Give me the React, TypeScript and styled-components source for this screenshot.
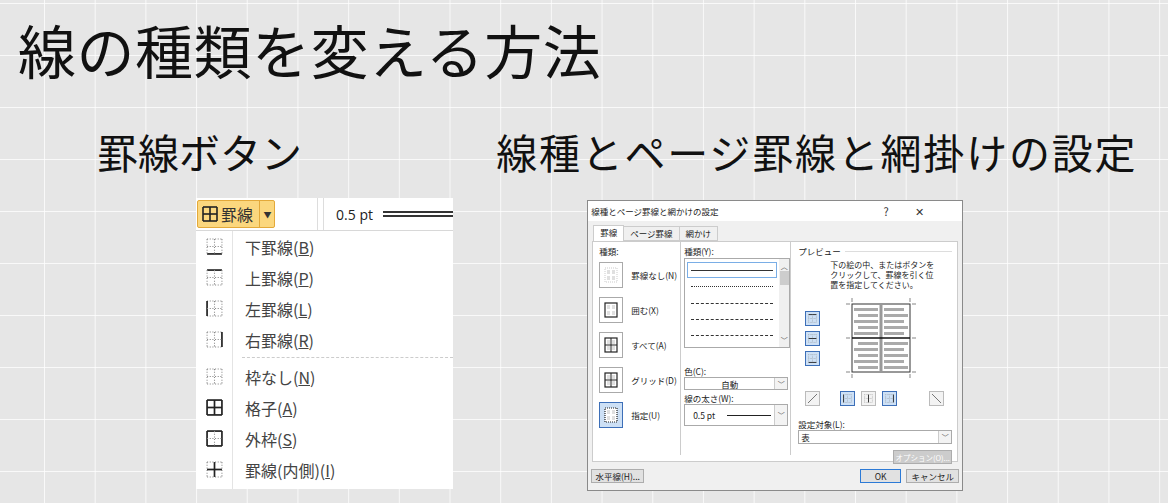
import React from "react";
import styled, { createGlobalStyle } from "styled-components";

const G = createGlobalStyle`
  html,body{margin:0;padding:0;}
  body{width:1168px;height:503px;overflow:hidden;background-color:#e6e6e6;
    background-image:linear-gradient(to right, rgba(255,255,255,.75) 1px, transparent 1px),linear-gradient(to bottom, rgba(255,255,255,.75) 1px, transparent 1px);
    background-size:50.7px 52px;background-position:44px 3px;
    font-family:"Noto Sans CJK JP","Noto Sans",sans-serif;color:#111;}
`;
const Page = styled.div`padding:14px 0 0 18px;`;
const Title = styled.h1`margin:0;font-weight:400;font-size:58px;line-height:70px;letter-spacing:0.5px;`;
const Cols = styled.div`display:flex;margin-top:42px;`;
const Col = styled.div<{ $w: number; $ml: number }>`width:${p => p.$w}px;margin-left:${p => p.$ml}px;display:flex;flex-direction:column;`;
const Heading = styled.h2<{ $ls?: number }>`margin:0;font-weight:400;font-size:41px;line-height:50px;white-space:nowrap;letter-spacing:${p => p.$ls || 0}px;`;
const Shot = styled.div<{ $ml: number; $mt: number }>`margin-left:${p => p.$ml}px;margin-top:${p => p.$mt}px;`;

const MenuShot = styled.div`width:257px;height:291px;background:#fff;display:flex;flex-direction:column;font-family:"Noto Sans CJK JP",sans-serif;color:#444;overflow:hidden;`;
const Toolbar = styled.div`height:32px;display:flex;align-items:center;border-bottom:1px solid #d8d8d8;`;
const SplitBtn = styled.div`margin-left:1px;height:28px;width:83px;display:flex;align-items:center;background:#fbd77e;border:1px solid #e3a93a;box-sizing:border-box;border-radius:2px;font-size:16px;color:#333;`;
const Caret = styled.div`margin-left:auto;width:14px;height:100%;border-left:1px solid #e3a93a;display:flex;align-items:center;justify-content:center;font-size:8px;`;
const Sep = styled.div`width:5px;height:100%;border-left:1px solid #ddd;border-right:1px solid #ddd;margin-left:42px;`;
const Pt = styled.div`margin-left:12px;font-family:"Open Sans",sans-serif;font-size:14px;color:#222;display:flex;align-items:center;gap:10px;white-space:nowrap;`;
const DoubleLine = styled.div`width:70px;height:2px;border-top:2px solid #333;border-bottom:2px solid #333;`;
const MenuBody = styled.div`flex:1;display:flex;flex-direction:column;padding-top:0;background:linear-gradient(to right,#fff 36px,#e4e4e4 36px,#e4e4e4 37px,#fff 37px);`;
const Item = styled.div`height:31px;display:flex;align-items:center;font-size:16px;`;
const IconCell = styled.div`width:36px;display:flex;justify-content:center;`;
const ItemText = styled.span`margin-left:13px;u{text-decoration:underline;}`;
const DashSep = styled.div`margin:2px 0 3px 46px;border-top:1px dashed #ccc;`;

type Sides = { t?: boolean; b?: boolean; l?: boolean; r?: boolean; h?: boolean; v?: boolean };
const BIcon = ({ t, b, l, r, h, v, s = 17 }: Sides & { s?: number }) => {
  const line = (x1: number, y1: number, x2: number, y2: number, on?: boolean) => (
    <line x1={x1} y1={y1} x2={x2} y2={y2} stroke={on ? "#222" : "#888"} strokeWidth={on ? 1.6 : 1} strokeDasharray={on ? undefined : "1 1.5"} />
  );
  return (
    <svg width={s} height={s} viewBox="0 0 16 16">
      {line(1, 1, 15, 1, t)}{line(1, 15, 15, 15, b)}{line(1, 1, 1, 15, l)}{line(15, 1, 15, 15, r)}
      {line(1, 8, 15, 8, h)}{line(8, 1, 8, 15, v)}
    </svg>
  );
};

const items: [Sides, string, string][] = [
  [{ b: true }, "下罫線(", "B"], [{ t: true }, "上罫線(", "P"], [{ l: true }, "左罫線(", "L"], [{ r: true }, "右罫線(", "R"],
];
const items2: [Sides, string, string][] = [
  [{}, "枠なし(", "N"], [{ t: true, b: true, l: true, r: true, h: true, v: true }, "格子(", "A"],
  [{ t: true, b: true, l: true, r: true }, "外枠(", "S"], [{ h: true, v: true }, "罫線(内側)(", "I"],
];

const Dlg = styled.div`width:376px;height:291px;background:#f0f0f0;border:1px solid #8a8a8a;box-sizing:border-box;display:flex;flex-direction:column;font-size:8.5px;color:#222;font-family:"Noto Sans CJK JP",sans-serif;`;
const TitleBar = styled.div`height:20px;background:#fff;display:flex;align-items:center;padding-left:3px;font-size:8.5px;`;
const TB = styled.span<{ $ml: number }>`margin-left:${p => p.$ml}px;font-size:11px;color:#333;`;
const Tabs = styled.div`display:flex;margin:4px 0 0 5px;align-items:flex-end;`;
const Tab = styled.div<{ $a?: boolean }>`padding:0 6px;height:${p => p.$a ? 15 : 13}px;line-height:13px;border:1px solid #ccc;border-bottom:${p => p.$a ? "none" : "1px solid #ccc"};background:${p => p.$a ? "#fff" : "#f0f0f0"};margin-right:-1px;`;
const Panel = styled.div`margin:0 4px;height:219px;background:#fff;border:1px solid #ccc;display:flex;`;
const LCol = styled.div`width:87px;padding:3px 0 0 6px;display:flex;flex-direction:column;`;
const Setting = styled.div`display:flex;align-items:center;height:35px;gap:8px;`;
const SBox = styled.div<{ $sel?: boolean }>`width:22px;height:24px;border:1px solid ${p => p.$sel ? "#3d6fb8" : "#aaa"};background:${p => p.$sel ? "#cde0f5" : "#fff"};display:flex;align-items:center;justify-content:center;`;
const MCol = styled.div`width:112px;border-left:1px solid #ccc;border-right:1px solid #ccc;padding:3px 0 0 3px;margin:0 0 6px;display:flex;flex-direction:column;`;
const ListBox = styled.div`margin-top:1px;width:104px;height:88px;border:1px solid #aaa;display:flex;`;
const Lines = styled.div`flex:1;padding:3px 2px;display:flex;flex-direction:column;`;
const LineRow = styled.div<{ $sel?: boolean }>`height:15px;display:flex;align-items:center;padding:0 3px;border:1px solid ${p => p.$sel ? "#7aaee6" : "transparent"};`;
const LineStroke = styled.div<{ $st: string }>`flex:1;border-top:1px ${p => p.$st} #333;`;
const Scroll = styled.div`width:10px;background:#f0f0f0;display:flex;flex-direction:column;align-items:center;font-size:7px;color:#555;justify-content:space-between;padding:2px 0;`;
const Thumb = styled.div`width:9px;height:14px;background:#cdcdcd;margin-bottom:auto;`;
const Lbl = styled.div<{ $mt: number }>`margin-top:${p => p.$mt}px;`;
const Combo = styled.div<{ $h: number; $w: number }>`width:${p => p.$w}px;height:${p => p.$h}px;border:1px solid #aaa;background:#fff;display:flex;align-items:center;box-sizing:border-box;`;
const ComboArrow = styled.div`margin-left:auto;width:12px;height:100%;border-left:1px solid #ccc;background:#f3f3f3;display:flex;align-items:center;justify-content:center;font-size:7px;color:#555;`;
const RCol = styled.div`flex:1;padding:3px 5px 0 7px;display:flex;flex-direction:column;`;
const Legend = styled.div`display:flex;align-items:center;gap:4px;&::after{content:"";flex:1;border-top:1px solid #ddd;}`;
const Note = styled.div`margin:3px 0 0 32px;line-height:10px;font-size:8px;white-space:nowrap;`;
const PrevArea = styled.div`display:flex;align-items:center;margin-top:8px;`;
const SideBtns = styled.div`display:flex;flex-direction:column;gap:5px;margin-left:7px;`;
const SmallBtn = styled.div<{ $on?: boolean }>`width:13px;height:13px;border:1px solid ${p => p.$on ? "#3d6fb8" : "#bbb"};background:${p => p.$on ? "#cde0f5" : "#f3f3f3"};display:flex;align-items:center;justify-content:center;`;
const BottomBtns = styled.div`display:flex;align-items:center;margin-top:13px;margin-left:7px;`;
const PushBtn = styled.div<{ $w: number; $def?: boolean; $dis?: boolean }>`width:${p => p.$w}px;height:14px;border:1px solid ${p => p.$def ? "#2c7ad6" : "#adadad"};background:${p => p.$dis ? "#ccc" : "#e1e1e1"};color:${p => p.$dis ? "#fff" : "#222"};display:flex;align-items:center;justify-content:center;box-sizing:border-box;white-space:nowrap;overflow:hidden;font-size:${p => p.$dis ? 7.5 : 8.5}px;`;
const Footer = styled.div`display:flex;align-items:center;padding:7px 3px 0 3px;gap:5px;`;
const Spacer = styled.span<{ $w?: number }>`width:${p => p.$w || 0}px;flex:${p => p.$w ? "none" : 1};`;

const Preview = () => (
  <svg width="70" height="80" viewBox="0 0 70 80" style={{ marginLeft: 26 }}>
    <rect x="6" y="6" width="58" height="68" fill="#fff" stroke="#333" />
    {[10, 16, 22, 28, 34, 44, 50, 56, 62, 68].map((y, i) => (
      <g key={i}>
        <rect x={i % 2 ? 12 : 8} y={y} width={i % 2 ? 20 : 24} height="3" fill="#aaa" />
        <rect x={38} y={y} width={i % 2 ? 24 : 20} height="3" fill="#aaa" />
      </g>
    ))}
    <rect x="33.5" y="6" width="3" height="68" fill="#999" />
    <line x1="6" y1="40" x2="64" y2="40" stroke="#111" strokeWidth="1.3" />
    {[[0, 6, 4, 6], [66, 6, 70, 6], [6, 0, 6, 4], [64, 0, 64, 4], [0, 74, 4, 74], [66, 74, 70, 74], [6, 76, 6, 80], [64, 76, 64, 80], [0, 40, 4, 40], [66, 40, 70, 40]].map((l, i) => (
      <line key={i} x1={l[0]} y1={l[1]} x2={l[2]} y2={l[3]} stroke="#333" strokeWidth=".6" />
    ))}
  </svg>
);

const SetIcon = ({ k }: { k: number }) => (
  <svg width="14" height="16" viewBox="0 0 14 16">
    <rect x="1" y="1" width="12" height="14" fill="#fff" stroke={k === 0 ? "#aaa" : "#222"} strokeWidth={k === 0 ? .6 : 1.2} strokeDasharray={k === 0 || k === 4 ? "1 1" : undefined} />
    {k >= 2 && k <= 3 && <><line x1="7" y1="1" x2="7" y2="15" stroke="#222" /><line x1="1" y1="8" x2="13" y2="8" stroke="#222" /></>}
    {[4, 6, 10, 12].map(y => <g key={y}><line x1="3" y1={y} x2="6" y2={y} stroke="#999" strokeWidth=".6" /><line x1="8" y1={y} x2="11" y2={y} stroke="#999" strokeWidth=".6" /></g>)}
  </svg>
);

export default function App() {
  return (
    <Page>
      <G />
      <Title>線の種類を変える方法</Title>
      <Cols>
        <Col $w={404} $ml={79}>
          <Heading>罫線ボタン</Heading>
          <Shot $ml={99} $mt={22}>
            <MenuShot>
              <Toolbar>
                <SplitBtn><span style={{ margin: "0 3px 0 4px", display: "flex" }}><BIcon t b l r h v s={16} /></span>罫線<Caret>▼</Caret></SplitBtn>
                <Sep /><Pt>0.5 pt<DoubleLine /></Pt>
              </Toolbar>
              <MenuBody>
                {items.map(([s, t, k]) => <Item key={k}><IconCell><BIcon {...s} /></IconCell><ItemText>{t}<u>{k}</u>)</ItemText></Item>)}
                <DashSep />
                {items2.map(([s, t, k]) => <Item key={k}><IconCell><BIcon {...s} /></IconCell><ItemText>{t}<u>{k}</u>)</ItemText></Item>)}
              </MenuBody>
            </MenuShot>
          </Shot>
        </Col>
        <Col $w={680} $ml={0}>
          <Heading $ls={1.8}>線種とページ罫線と網掛けの設定</Heading>
          <Shot $ml={91} $mt={24}>
            <Dlg>
              <TitleBar>線種とページ罫線と網かけの設定<TB $ml={165}>?</TB><TB $ml={26}>✕</TB></TitleBar>
              <Tabs><Tab $a>罫線</Tab><Tab>ページ罫線</Tab><Tab>網かけ</Tab></Tabs>
              <Panel>
                <LCol>
                  <div>種類:</div>
                  {["罫線なし(N)", "囲む(X)", "すべて(A)", "グリッド(D)", "指定(U)"].map((t, i) => (
                    <Setting key={t}><SBox $sel={i === 4}><SetIcon k={i} /></SBox>{t}</Setting>
                  ))}
                </LCol>
                <MCol>
                  <div>種類(Y):</div>
                  <ListBox>
                    <Lines>
                      <LineRow $sel><LineStroke $st="solid" /></LineRow>
                      <LineRow><LineStroke $st="dotted" /></LineRow>
                      <LineRow><LineStroke $st="dashed" /></LineRow>
                      <LineRow><LineStroke $st="dashed" /></LineRow>
                      <LineRow><LineStroke $st="dashed" /></LineRow>
                    </Lines>
                    <Scroll><span>︿</span><Thumb /><span>﹀</span></Scroll>
                  </ListBox>
                  <Lbl $mt={17}>色(C):</Lbl>
                  <Combo $w={104} $h={13}><span style={{ flex: 1, textAlign: "center" }}>自動</span><ComboArrow>﹀</ComboArrow></Combo>
                  <Lbl $mt={2}>線の太さ(W):</Lbl>
                  <Combo $w={104} $h={22}><span style={{ marginLeft: 8 }}>0.5 pt</span><span style={{ width: 44, borderTop: "1px solid #222", marginLeft: 12 }} /><ComboArrow>﹀</ComboArrow></Combo>
                </MCol>
                <RCol>
                  <Legend>プレビュー</Legend>
                  <Note>下の絵の中、またはボタンを<br />クリックして、罫線を引く位<br />置を指定してください。</Note>
                  <PrevArea>
                    <SideBtns>
                      <SmallBtn $on><BIcon t s={9} /></SmallBtn>
                      <SmallBtn $on><BIcon h s={9} /></SmallBtn>
                      <SmallBtn $on><BIcon b s={9} /></SmallBtn>
                    </SideBtns>
                    <Preview />
                  </PrevArea>
                  <BottomBtns>
                    <SmallBtn><svg width="9" height="9"><line x1="0" y1="9" x2="9" y2="0" stroke="#777" /></svg></SmallBtn>
                    <Spacer $w={20} />
                    <SmallBtn $on><BIcon l s={9} /></SmallBtn><Spacer $w={6} />
                    <SmallBtn><BIcon v s={9} /></SmallBtn><Spacer $w={6} />
                    <SmallBtn $on><BIcon r s={9} /></SmallBtn>
                    <Spacer $w={32} />
                    <SmallBtn><svg width="9" height="9"><line x1="0" y1="0" x2="9" y2="9" stroke="#777" /></svg></SmallBtn>
                  </BottomBtns>
                  <Lbl $mt={12}>設定対象(L):</Lbl>
                  <Combo $w={154} $h={14}><span style={{ marginLeft: 2 }}>表</span><ComboArrow>﹀</ComboArrow></Combo>
                  <div style={{ display: "flex", justifyContent: "flex-end", marginTop: 6 }}><PushBtn $w={59} $dis>オプション(O)...</PushBtn></div>
                </RCol>
              </Panel>
              <Footer>
                <PushBtn $w={53}>水平線(H)...</PushBtn>
                <Spacer />
                <PushBtn $w={41} $def>OK</PushBtn>
                <PushBtn $w={53}>キャンセル</PushBtn>
              </Footer>
            </Dlg>
          </Shot>
        </Col>
      </Cols>
    </Page>
  );
}
